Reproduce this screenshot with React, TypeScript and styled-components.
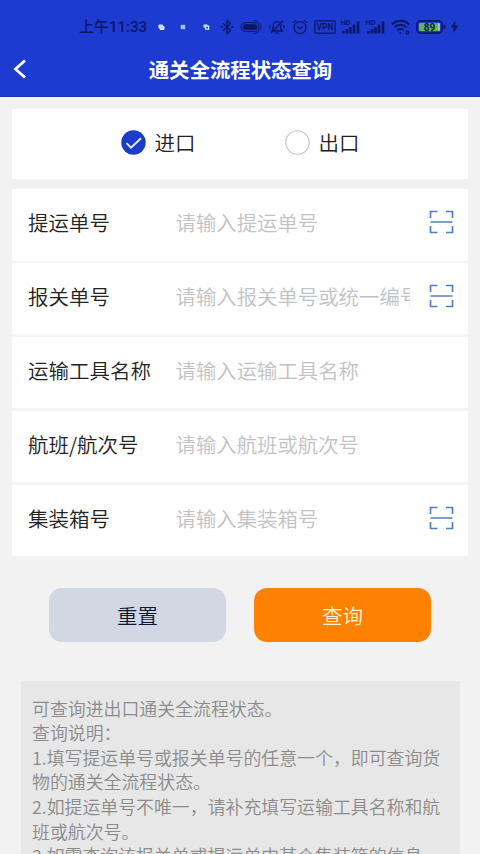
import { useState } from "react";
import styled, { createGlobalStyle } from "styled-components";

const GlobalStyle = createGlobalStyle`
  * {
    box-sizing: border-box;
  }
  body {
    margin: 0;
    background-color: #f2f2f2;
    font-family: "Noto Sans CJK SC", sans-serif;
    font-weight: 350;
  }
`;

const INK = "#0b1764";

const S = {
  Page: styled.div`
    display: flex;
    flex-direction: column;
    width: 480px;
    height: 854px;
    overflow: hidden;
    background-color: #f2f2f2;
  `,
  Header: styled.header`
    flex: none;
    height: 97px;
    background-color: #1d3bd1;
    border-bottom: 1px solid #1a35b8;
  `,
  StatusBar: styled.div`
    display: flex;
    align-items: center;
    height: 53px;
    padding-left: 79px;
    color: ${INK};
  `,
  Time: styled.span`
    width: 78px;
    font-family: Roboto, "Noto Sans CJK SC", sans-serif;
    font-size: 15px;
    font-weight: 500;
    line-height: 20px;
    white-space: nowrap;
  `,
  StatusIcon: styled.svg<{ $gap?: number }>`
    flex: none;
    display: block;
    margin-left: ${({ $gap = 0 }) => $gap}px;
    overflow: visible;
    fill: none;
    stroke: ${INK};
    stroke-width: 1.3;
    text {
      fill: ${INK};
      stroke: none;
      font-family: Roboto, sans-serif;
      font-weight: 700;
    }
  `,
  TitleBar: styled.div`
    display: grid;
    grid-template-columns: 40px 1fr 40px;
    align-items: center;
    height: 32px;
  `,
  Back: styled.button`
    display: flex;
    padding: 0 0 0 13px;
    border: 0;
    background: none;
  `,
  Title: styled.h1`
    margin: 0;
    padding: 0 0 1px 1px;
    color: white;
    font-size: 20.4px;
    font-weight: 700;
    line-height: 30px;
    text-align: center;
  `,
  Choices: styled.div`
    flex: none;
    display: flex;
    gap: 89px;
    height: 70px;
    margin: 12px 12px 0;
    padding: 0 0 3px 108.5px;
    background-color: white;
  `,
  Choice: styled.button`
    display: flex;
    align-items: center;
    gap: 9px;
    padding: 0;
    border: 0;
    background: none;
    color: #222;
    font-family: inherit;
    font-size: 20.5px;
    font-weight: inherit;
  `,
  ChoiceName: styled.span`
    padding-bottom: 2px;
  `,
  Form: styled.form`
    flex: none;
    display: grid;
    grid-template-rows: repeat(5, 71.2px);
    gap: 2.6px;
    margin: 10.4px 12px 0;
    background-color: #f5f5f5;
  `,
  Row: styled.label`
    display: grid;
    grid-template-columns: 147.5px 234px 1fr;
    align-items: center;
    padding: 0 14px 5px 16px;
    background-color: white;
    color: #222;
    font-size: 20.5px;
  `,
  Input: styled.input`
    width: 100%;
    padding: 0;
    border: 0;
    outline: 0;
    background: none;
    font-family: inherit;
    font-size: 20.4px;
    font-weight: inherit;
    line-height: 30px;
    &::placeholder {
      color: #c2c2c5;
      opacity: 1;
    }
  `,
  Scan: styled.svg`
    justify-self: end;
    fill: none;
    stroke: #5080bd;
    stroke-width: 1.7;
  `,
  Actions: styled.div`
    flex: none;
    display: flex;
    gap: 28px;
    margin: 32px 0 0 49px;
  `,
  Button: styled.button<{ $primary?: boolean }>`
    width: 177px;
    height: 54px;
    padding: 1px 0 0;
    border: 0;
    border-radius: 13px;
    background-color: ${({ $primary }) => ($primary ? "#ff8100" : "#d1d7e3")};
    color: ${({ $primary }) => ($primary ? "#fff3d6" : "#10182e")};
    font-family: inherit;
    font-size: 20.5px;
    font-weight: inherit;
  `,
  Notes: styled.section`
    flex: none;
    margin: 39px 20.5px 0 21px;
    padding: 15px 14px 15px 11px;
    background-color: #e7e7e7;
    color: #8b8b8b;
    font-size: 17.9px;
    line-height: 24.6px;
  `,
  Note: styled.p`
    margin: 0;
  `,
};

const fields = [
  { label: "提运单号", placeholder: "请输入提运单号", scan: true },
  { label: "报关单号", placeholder: "请输入报关单号或统一编号", scan: true },
  { label: "运输工具名称", placeholder: "请输入运输工具名称", scan: false },
  { label: "航班/航次号", placeholder: "请输入航班或航次号", scan: false },
  { label: "集装箱号", placeholder: "请输入集装箱号", scan: true },
];

const notes = [
  "可查询进出口通关全流程状态。",
  "查询说明：",
  "1.填写提运单号或报关单号的任意一个，即可查询货物的通关全流程状态。",
  "2.如提运单号不唯一，请补充填写运输工具名称和航班或航次号。",
  "3.如需查询该报关单或提运单中某个集装箱的信息",
];

const Signal = ({ gap }: { gap: number }) => (
  <S.StatusIcon $gap={gap} width="20" height="16" viewBox="0 0 20 16">
    <text x="-0.5" y="5.5" fontSize="7.5">
      HD
    </text>
    <path
      d="M2.5 14.5v-2.5M6 14.5v-4.5M9.5 14.5v-6.5M13 14.5v-9M17 14.5v-12"
      strokeWidth="2.6"
    />
  </S.StatusIcon>
);

const StatusIcons = () => (
  <>
    <S.StatusIcon width="8" height="6" viewBox="0 0 8 6">
      <path d="M2 1h3.5v1.5H7v3H3.2V4H2z" fill="#b9dcf5" stroke="#e2f2fc" strokeWidth="1" />
    </S.StatusIcon>
    <S.StatusIcon $gap={14} width="8" height="6" viewBox="0 0 8 6">
      <path d="M2.8 .8v4.4M5 .8v4.4M1.6 2h4.600M1.6 4h4.600" stroke="#cce8fa" strokeWidth="1.2" />
    </S.StatusIcon>
    <S.StatusIcon $gap={14.5} width="8" height="6" viewBox="0 0 8 6">
      <path d="M2.2 3.8V1h3.2M3.6 2.2h3v3h-3z" stroke="#d7edfb" strokeWidth="1.2" />
    </S.StatusIcon>
    <S.StatusIcon $gap={10.5} width="14" height="16" viewBox="0 0 14 16">
      <path d="M3 4.2l7.5 7.2L7 14.7V1.3l3.5 3.3L3 11.8" />
      <path d="M0.8 8h2M11.2 8h2" strokeWidth="1.8" />
    </S.StatusIcon>
    <S.StatusIcon $gap={6} width="23" height="16" viewBox="0 0 23 16">
      <rect x="1" y="3.6" width="18" height="8.8" rx="4.4" strokeWidth="1" />
      <rect x="3.4" y="5.8" width="13.2" height="4.4" rx="2.2" fill={INK} />
      <path d="M13 1.6c10.5-.8 10.5 13.600 0 12.800" strokeWidth="0.9" />
    </S.StatusIcon>
    <S.StatusIcon $gap={6} width="16" height="16" viewBox="0 0 16 16">
      <path d="M2.7 12h10.6l-1.5-2.3V6.5a3.8 3.8 0 0 0-7.6 0v3.2zM6.5 14.2h3M14.2 1.2L2 14.5" />
      <path d="M1 6v3.5M15 6v3.5" strokeWidth="1.2" />
    </S.StatusIcon>
    <S.StatusIcon $gap={7} width="16" height="16" viewBox="0 0 16 16">
      <circle cx="8" cy="8.6" r="6" />
      <path d="M5.2 7.6L8 9.8l2.9-2.2M1 3.7L4 1.2M15 3.7L12 1.2" />
    </S.StatusIcon>
    <S.StatusIcon $gap={6} width="22" height="14" viewBox="0 0 22 14">
      <rect x="0.8" y="0.8" width="20.4" height="12.4" rx="1" strokeWidth="1.2" />
      <text x="11" y="10" fontSize="8.4" textAnchor="middle">
        VPN
      </text>
    </S.StatusIcon>
    <Signal gap={5} />
    <Signal gap={4.5} />
    <S.StatusIcon $gap={5} width="19" height="16" viewBox="0 0 19 16">
      <path
        d="M.8 5.5c5-5 12.4-5 17.4 0M3.5 8.4c3.5-3.4 8.5-3.4 12 0M6.3 11.2c2-1.8 4.4-1.8 6.4 0"
        strokeWidth="2"
      />
      <circle cx="9.5" cy="13.8" r="1.1" fill={INK} stroke="none" />
      <circle cx="16.5" cy="13.5" r="1.3" strokeWidth="1.2" />
    </S.StatusIcon>
    <S.StatusIcon $gap={6} width="30" height="14" viewBox="0 0 30 14">
      <rect x="0.9" y="0.9" width="25.2" height="12.2" rx="3.6" strokeWidth="1.6" />
      <rect x="3" y="3" width="18.5" height="8" rx="1.5" fill="#62b947" stroke="none" />
      <path d="M21.5 3h1.5a1 1 0 0 1 1 1v6a1 1 0 0 1-1 1h-1.5z" fill="#9fb8df" stroke="none" />
      <path d="M28.5 5v4" strokeWidth="1.8" />
      <text x="13.5" y="10.600" fontSize="10" textAnchor="middle">
        89
      </text>
    </S.StatusIcon>
    <S.StatusIcon $gap={4} width="9" height="14" viewBox="0 0 9 14">
      <path d="M5.5.8L.6 7.6h3L3 13.2l5.4-7.4H5z" fill={INK} stroke="none" />
    </S.StatusIcon>
  </>
);

const ScanIcon = () => (
  <S.Scan width="25" height="24" viewBox="0 0 25 24">
    <path d="M1.5 8V1.5H8.5M17 1.5h6.5V8M1.5 16v6.5H8.5M17 22.5h6.5V16M1.5 12h22" />
  </S.Scan>
);

const RadioIcon = ({ checked }: { checked: boolean }) => (
  <svg width="25" height="25" viewBox="0 0 25 25">
    {checked ? (
      <>
        <circle cx="12.5" cy="12.5" r="12.2" fill="#1b3bc9" />
        <path d="M5.5 13.2l4.5 4.5L20 8.2" fill="none" stroke="#e9f0ff" strokeWidth="1.9" />
      </>
    ) : (
      <circle cx="12.5" cy="12.5" r="11.7" fill="white" stroke="#c3c3c3" strokeWidth="1.1" />
    )}
  </svg>
);

const App = () => {
  const [direction, setDirection] = useState("进口");

  return (
    <S.Page>
      <GlobalStyle />
      <S.Header>
        <S.StatusBar>
          <S.Time>上午11:33</S.Time>
          <StatusIcons />
        </S.StatusBar>
        <S.TitleBar>
          <S.Back aria-label="返回">
            <svg width="14" height="20" viewBox="0 0 14 20">
              <path d="M12 1.5L2.5 10l9.5 8.5" fill="none" stroke="white" strokeWidth="2.8" />
            </svg>
          </S.Back>
          <S.Title>通关全流程状态查询</S.Title>
        </S.TitleBar>
      </S.Header>
      <S.Choices>
        {["进口", "出口"].map((name) => (
          <S.Choice key={name} type="button" onClick={() => setDirection(name)}>
            <RadioIcon checked={direction === name} />
            <S.ChoiceName>{name}</S.ChoiceName>
          </S.Choice>
        ))}
      </S.Choices>
      <S.Form id="query" onSubmit={(e) => e.preventDefault()}>
        {fields.map(({ label, placeholder, scan }) => (
          <S.Row key={label}>
            {label}
            <S.Input placeholder={placeholder} />
            {scan ? <ScanIcon /> : null}
          </S.Row>
        ))}
      </S.Form>
      <S.Actions>
        <S.Button type="reset" form="query">
          重置
        </S.Button>
        <S.Button type="submit" form="query" $primary>
          查询
        </S.Button>
      </S.Actions>
      <S.Notes>
        {notes.map((note) => (
          <S.Note key={note}>{note}</S.Note>
        ))}
      </S.Notes>
    </S.Page>
  );
};

export default App;
